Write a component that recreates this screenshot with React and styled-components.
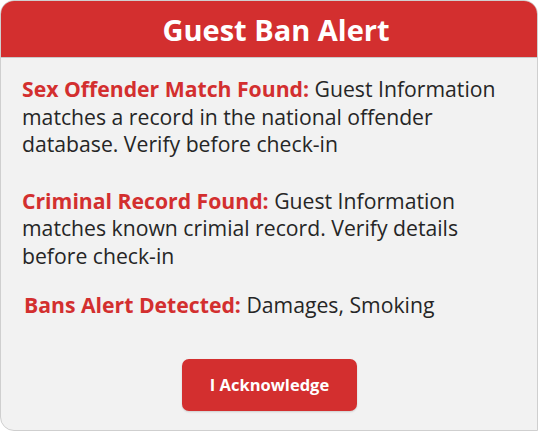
import React from 'react'
import styled, { createGlobalStyle } from 'styled-components';

const GlobalStyle = createGlobalStyle`
  html, body {
    margin: 0;
    padding: 0;
    background: #ffffff;
  }
  body {
    font-family: "Open Sans", "Noto Sans", sans-serif;
  }
`;

const alerts = [
  {
    title: 'Sex Offender Match Found:',
    text: 'Guest Information matches a record in the national offender database. Verify before check-in',
    gap: 29,
  },
  {
    title: 'Criminal Record Found:',
    text: 'Guest Information matches known crimial record. Verify details before check-in',
    gap: 22,
  },
  {
    title: 'Bans Alert Detected:',
    text: 'Damages, Smoking',
    gap: 0,
    indent: 2,
  },
];

const App = () => {
  return (
    <>
      <GlobalStyle />
      <Modal>
        <Header>Guest Ban Alert</Header>
        <Body>
          {alerts.map((a, i) => (
            <Alert key={i} $gap={a.gap} $indent={a.indent || 0}>
              <Label>{a.title}</Label> {a.text}
            </Alert>
          ))}
          <Footer>
            <Button>I Acknowledge</Button>
          </Footer>
        </Body>
      </Modal>
    </>
  )
}

const Modal = styled.div`
  width: 538px;
  height: 431px;
  box-sizing: border-box;
  background: #f2f2f2;
  border: 1px solid #cfcfcf;
  border-radius: 14px 14px 0 14px;
  overflow: hidden;
  display: flex;
  flex-direction: column;
`;

const Header = styled.div`
  height: 57px;
  background: #d32f2f;
  color: #ffffff;
  font-weight: 700;
  font-size: 29px;
  display: flex;
  align-items: center;
  justify-content: center;
  padding-left: 14px;
  padding-top: 1px;
  box-sizing: border-box;
  border-bottom: 1px solid #c9c9c9;
`;

const Body = styled.div`
  padding: 17px 26px 0 21px;
  display: flex;
  flex-direction: column;
`;

const Alert = styled.p`
  margin: 0 0 ${({ $gap }) => $gap}px ${({ $indent }) => $indent}px;
  font-size: 21.2px;
  line-height: 27.5px;
  color: #262626;
`;

const Label = styled.span`
  color: #d32f2f;
  font-weight: 700;
`;

const Footer = styled.div`
  display: flex;
  justify-content: center;
  padding-top: 40px;
  margin-right: -6px;
`;

const Button = styled.button`
  width: 175px;
  height: 52px;
  border: none;
  border-radius: 7px;
  background: #d32f2f;
  color: #ffffff;
  font-family: "Open Sans", "Noto Sans", sans-serif;
  font-weight: 700;
  font-size: 16.5px;
  cursor: pointer;
  box-shadow: 0 1px 2px rgba(0, 0, 0, 0.15);
`;

export default App
